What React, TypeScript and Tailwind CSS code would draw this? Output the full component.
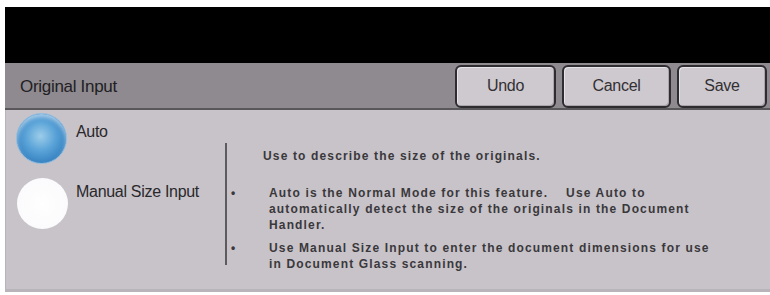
import React from "react";

const font = { fontFamily: '"Liberation Sans", Arial, sans-serif' };

function Btn({ label, w }: { label: string; w: string }) {
  return (
    <div
      className={`${w} h-[43px] rounded-[6px] border-2 border-[#2e2c2f] bg-[#cdc9cf] shadow-[inset_1px_1px_0_#e6e3e8,inset_-1px_-1px_0_#a9a5ab] flex items-center justify-center text-[16px] text-[#333033] tracking-[-0.3px]`}
    >
      {label}
    </div>
  );
}

export default function App() {
  return (
    <div className="w-[770px] h-[295px] bg-white pt-[7px] pl-[5px] flex flex-col" style={font}>
      <div className="h-[56px] bg-black" />
      <div className="h-[47px] bg-[#8e8a8f] border-b-2 border-[#5a575b] flex items-center pr-[3px]">
        <div className="flex-1 pl-[15px] pt-[2px] text-[17px] text-[#222023] tracking-[-0.3px]">Original Input</div>
        <div className="flex items-center gap-[6px] pt-[1px]">
          <Btn label="Undo" w="w-[101px]" />
          <Btn label="Cancel" w="w-[109px]" />
          <Btn label="Save" w="w-[90px]" />
        </div>
      </div>
      <div className="flex-1 bg-[#c7c3c9] border-b-[3px] border-[#6e6b70] mb-[3px] flex border-l border-[#b8b4ba]">
        <div className="w-[219px] pt-[3px] pl-[10px] flex flex-col gap-[14px]">
          <div className="flex items-start gap-[9px]">
            <div className="w-[51px] h-[51px] rounded-full border border-[#8fbce0] bg-[radial-gradient(circle_at_48%_45%,#9ccde9_0%,#5aa3d8_40%,#2a76b9_85%,#1d5f9f_100%)] shadow-[inset_0_3px_4px_rgba(255,255,255,0.55)]" />
            <div className="pt-[7px] text-[16px] text-[#2a282b] tracking-[-0.3px]">Auto</div>
          </div>
          <div className="flex items-start gap-[8px]">
            <div className="w-[51px] h-[51px] rounded-full bg-[radial-gradient(circle_at_50%_50%,#ffffff_0%,#fbfafc_70%,#eceaee_100%)] ml-[1px]" />
            <div className="pt-[2px] text-[16px] text-[#2a282b] tracking-[-0.3px]">Manual Size Input</div>
          </div>
        </div>
        <div className="mt-[33px] h-[122px] w-[2px] bg-[#5e5b60]" />
        <div
          className="pl-[4px] pt-[38px] text-[12px] font-bold text-[#3a383b] leading-[16px] tracking-[1.15px] whitespace-nowrap"
        >
          <div className="pl-[32px] mb-[21px]">Use to describe the size of the originals.</div>
          <div className="flex mb-[7px]">
            <div className="w-[38px]">•</div>
            <div>
              <span className="whitespace-pre">Auto is the Normal Mode for this feature.    Use Auto to</span>
              <br />
              automatically detect the size of the originals in the Document
              <br />
              Handler.
            </div>
          </div>
          <div className="flex">
            <div className="w-[38px]">•</div>
            <div>
              Use Manual Size Input to enter the document dimensions for use
              <br />
              in Document Glass scanning.
            </div>
          </div>
        </div>
      </div>
    </div>
  );
}
